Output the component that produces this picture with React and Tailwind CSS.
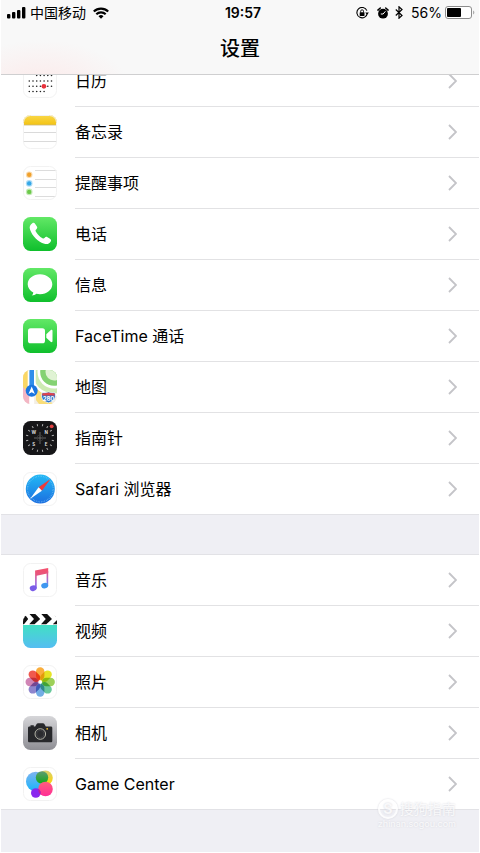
import { useId } from 'react';

const TICKS = Array.from({ length: 16 }, (_, i) => i * 22.5 + 11.25);
const PETALS = ['#f9a01b', '#e3e000', '#8cc83c', '#4fbf8b', '#5a9fe0', '#7a6fc4', '#c86fa8', '#ee3b2f'];

// Rounded app tile, everything inside is clipped to it
function Tile({ fill = '#fff', outline = false, children }) {
  const id = useId();
  return (
    <svg viewBox="0 0 34 34" className="mt-2 size-[34px] shrink-0" aria-hidden="true">
      <clipPath id={id}>
        <rect width="34" height="34" rx="7.5" />
      </clipPath>
      <g clipPath={`url(#${id})`}>
        <rect width="34" height="34" fill={fill} />
        {children}
      </g>
      {outline && <rect x=".5" y=".5" width="33" height="33" rx="7" fill="none" stroke="#f2f2f2" />}
    </svg>
  );
}

function Gradient({ id, from, to }) {
  return (
    <linearGradient id={id} x1="0" y1="0" x2="0" y2="1">
      <stop offset="0" stopColor={from} />
      <stop offset="1" stopColor={to} />
    </linearGradient>
  );
}

function CalendarIcon() {
  const rows = [[2, 6, 11.5], [0, 6, 17], [0, 6, 22.3], [0, 4, 27.5]];
  return (
    <Tile outline>
      {rows.map(([from, to, y]) =>
        Array.from({ length: to - from + 1 }, (_, i) => (
          <circle key={`${y}-${i}`} cx={6.3 + (from + i) * 3.7} cy={y} r=".8" fill="#222" />
        ))
      )}
      <circle cx="20.9" cy="22.3" r="2.4" fill="#e8323c" />
    </Tile>
  );
}

function NotesIcon() {
  return (
    <Tile outline>
      <Gradient id="notes" from="#fad84a" to="#f3c313" />
      <rect width="34" height="10" fill="url(#notes)" />
      <path d="M0 10h34" stroke="#cbb77a" strokeWidth=".8" />
      <path d="M0 17.5h34M0 26.5h34" stroke="#dadada" />
    </Tile>
  );
}

function RemindersIcon() {
  return (
    <Tile outline>
      <path d="M12 4.5h22M12 13.5h22M12 21.5h22M12 30.5h22" stroke="#dcdcdc" />
      {[['#f0a02c', 8.8], ['#35a8e8', 17.4], ['#6cc94a', 25.9]].map(([c, y]) => (
        <g key={y}>
          <circle cx="6.2" cy={y} r="3.3" fill={c} opacity=".4" />
          <circle cx="6.2" cy={y} r="2.2" fill={c} />
        </g>
      ))}
    </Tile>
  );
}

function PhoneIcon() {
  return (
    <Tile fill="url(#green)">
      <path
        d="M9.3 6.2c1.2-.8 2.1-.5 2.9.7l1.7 2.7c.6 1 .4 1.9-.5 2.7-.9.7-1.1 1.3-.6 2.2 1.6 2.9 3.8 5.1 6.7 6.7.9.5 1.5.3 2.2-.5.8-1 1.7-1.2 2.8-.5l2.5 1.6c1.2.8 1.4 1.8.6 2.9-1.4 2.1-3.5 2.9-6.1 2.1C15 24.7 9.5 19.5 7 12.4c-.9-2.6.1-4.8 2.3-6.200z"
        fill="#fff"
      />
    </Tile>
  );
}

function MessagesIcon() {
  return (
    <Tile fill="url(#green)">
      <path
        d="M17 6.200c6.900 0 12.300 4.400 12.300 10S23.900 26.200 17 26.200c-1.300 0-2.500-.1-3.700-.4-1.100 1-2.700 1.600-4.700 1.700 1-.9 1.600-1.900 1.700-3.100C6.900 22.600 4.700 19.700 4.700 16.200c0-5.600 5.400-10 12.300-10z"
        fill="#fff"
      />
    </Tile>
  );
}

function FaceTimeIcon() {
  return (
    <Tile fill="url(#green)">
      <rect x="5" y="9.3" width="17" height="15" rx="2.600" fill="#fff" />
      <path d="M23.300 15.200l4.300-4c.9-.8 1.900-.5 1.900.7v10.200c0 1.200-1 1.500-1.900.7l-4.300-4z" fill="#fff" />
    </Tile>
  );
}

function MapsIcon() {
  return (
    <Tile fill="#f3eee4">
      <path d="M0 0h6v20H0z" fill="#fad766" />
      <path d="M0 17l8 8v9H0z" fill="#f3b6c4" />
      <path d="M13 17l17 17H16l-3-4z" fill="#f9dd78" />
      <circle cx="31" cy="2" r="24" fill="#fff" />
      <circle cx="31" cy="2" r="21.5" fill="#cdeab2" />
      <circle cx="31" cy="2" r="16.500" fill="#fff" />
      <circle cx="31" cy="2" r="13.800" fill="#84d272" />
      <circle cx="31" cy="2" r="8.500" fill="#e0f3d4" />
      <path d="M8.700 24v10" stroke="#fff" strokeWidth="5" />
      <path d="M8.700 0v18" stroke="#fff" strokeWidth="8" />
      <path d="M8.700 0v18" stroke="#2f8eea" strokeWidth="4.600" />
      <circle cx="8.700" cy="20.800" r="6" fill="#1976e0" />
      <path d="M8.700 16.600l3.200 7.400-3.200-1.700-3.200 1.700z" fill="#fff" />
      <path
        d="M19.500 22.500c1.800.6 3.300.3 6-.5 2.700.8 4.200 1.100 6 .5 1.500 2 1.300 5-.3 7.200-1.300 1.700-3.500 2.200-5.700 3.100-2.200-.9-4.400-1.400-5.700-3.100-1.600-2.200-1.800-5.200-.3-7.200z"
        fill="#2671c8"
        stroke="#fff"
        strokeWidth=".7"
      />
      <path d="M19.700 23c1.700.5 3.300.2 5.800-.5 2.500.7 4.100 1 5.800.5l.7 2.400H19z" fill="#e0424c" />
      <text x="25.500" y="30.600" textAnchor="middle" fontSize="6" fontWeight="700" fill="#fff" fontFamily="Inter, sans-serif">
        280
      </text>
    </Tile>
  );
}

function CompassIcon() {
  return (
    <Tile fill="#161618">
      {TICKS.map((a) => (
        <path key={a} d="M17 2.800v2.200" stroke="#b0b0b0" strokeWidth="1" transform={`rotate(${a} 17 17)`} />
      ))}
      <path d="M17 11v12M11 17h12" stroke="#777" strokeWidth=".8" />
      <circle cx="17" cy="17" r="3" fill="none" stroke="#3c3c3c" strokeWidth=".7" />
      <circle cx="28.700" cy="5.300" r="1.900" fill="#e04040" />
      {[['W', 10.8, 12.6], ['N', 23.2, 12.6], ['S', 10.8, 25.2], ['E', 23.2, 25.2]].map(([t, x, y]) => (
        <text key={t} x={x} y={y} textAnchor="middle" fontSize="4.500" fontWeight="700" fill="#ddd" fontFamily="Inter, sans-serif">
          {t}
        </text>
      ))}
    </Tile>
  );
}

function SafariIcon() {
  return (
    <Tile outline>
      <Gradient id="safari" from="#22b9f5" to="#1c6fe0" />
      <circle cx="17.300" cy="17" r="14.500" fill="url(#safari)" />
      <circle cx="17.300" cy="17" r="12.800" fill="none" stroke="#8fd0f8" strokeWidth="1.300" strokeDasharray=".4 1.300" />
      <path d="M27.500 7L18.900 18.800 15.600 15.200z" fill="#ee3a3a" />
      <path d="M7 27l8.600-11.800 3.300 3.600z" fill="#fff" />
    </Tile>
  );
}

function MusicIcon() {
  return (
    <Tile outline>
      <linearGradient id="music" gradientUnits="userSpaceOnUse" x1="19" y1="5" x2="15" y2="29">
        <stop offset="0" stopColor="#f4506e" />
        <stop offset=".3" stopColor="#e6567f" />
        <stop offset=".6" stopColor="#a565d8" />
        <stop offset="1" stopColor="#6a5cf0" />
      </linearGradient>
      <linearGradient id="musicStem" gradientUnits="userSpaceOnUse" x1="0" y1="8" x2="0" y2="26">
        <stop offset="0" stopColor="#f0527a" />
        <stop offset=".5" stopColor="#a070d8" />
        <stop offset="1" stopColor="#3a9cf2" />
      </linearGradient>
      <path d="M12.100 7.600L25.200 5v5.300l-11.500 2.400v12.700h-1.600z" fill="url(#music)" />
      <ellipse cx="10.200" cy="25.200" rx="3.500" ry="2.800" fill="#7a5ce8" transform="rotate(-15 10.200 25.200)" />
      <path d="M23.600 8h1.600v14.800h-1.600z" fill="url(#musicStem)" />
      <ellipse cx="21.700" cy="22.600" rx="3.500" ry="2.800" fill="#3f97f0" transform="rotate(-15 21.700 22.600)" />
    </Tile>
  );
}

function VideosIcon() {
  return (
    <Tile>
      <Gradient id="videos" from="#41e0c4" to="#55bdf2" />
      <rect y="11" width="34" height="23" fill="url(#videos)" />
      <path
        d="M0 0h1.500L5.200 5 1 10.200H0zM6.500 0h5.800l4.900 5-5.700 5.200H6.200L11 5zM18.300 0h5.800L29 5l-5.700 5.200H18L22.800 5zM30 0h4v4zM34 6v4.200h-4.200z"
        fill="#111"
      />
    </Tile>
  );
}

function PhotosIcon() {
  return (
    <Tile outline>
      {PETALS.map((c, i) => (
        <rect
          key={c}
          x="13"
          y="2.300"
          width="8.400"
          height="13"
          rx="4.200"
          fill={c}
          opacity=".85"
          className="mix-blend-multiply"
          transform={`rotate(${i * 45} 17.200 17)`}
        />
      ))}
    </Tile>
  );
}

function CameraIcon() {
  return (
    <Tile fill="url(#silver)">
      <Gradient id="silver" from="#d6d6d9" to="#8e8e94" />
      <path
        d="M6.500 10.500h1V9.200h3.300v1.300h1.400l1.600-2.700c.3-.4.7-.6 1.200-.6h5c.5 0 .9.2 1.200.6l1.600 2.700h5c1 0 1.500.5 1.500 1.500v12.700c0 1-.5 1.500-1.500 1.500H6.500c-1 0-1.500-.5-1.500-1.500V12c0-1 .5-1.500 1.500-1.500z"
        fill="#27282b"
      />
      <circle cx="17.300" cy="18" r="5.300" fill="#2b2c2f" stroke="#b5b5a8" strokeWidth="1" />
      <circle cx="17.300" cy="18" r="3.700" fill="none" stroke="#47484c" strokeWidth=".7" />
      <circle cx="24.200" cy="12.800" r=".9" fill="#f4c030" />
    </Tile>
  );
}

function GameCenterIcon() {
  return (
    <Tile outline>
      <Gradient id="gcBlue" from="#7fb4f0" to="#18b4fb" />
      <Gradient id="gcPink" from="#ff5f7c" to="#ff2d96" />
      <Gradient id="gcYellow" from="#d9d070" to="#ffd400" />
      <Gradient id="gcGreen" from="#5f9c72" to="#12a818" />
      <circle cx="22.500" cy="10.800" r="7.300" fill="url(#gcYellow)" />
      <circle cx="12.800" cy="14.500" r="9.800" fill="url(#gcBlue)" />
      <circle cx="19" cy="10.500" r="6.200" fill="url(#gcGreen)" />
      <circle cx="22.500" cy="22" r="7.300" fill="url(#gcPink)" />
      <circle cx="12.800" cy="26" r="4.800" fill="#8a28ee" />
      <path d="M15.300 21.900a4.800 4.800 0 0 1 2 5.800 7.300 7.300 0 0 1-2-5.800z" fill="#c0209c" />
    </Tile>
  );
}

const GROUPS = [
  [
    ['日历', CalendarIcon],
    ['备忘录', NotesIcon],
    ['提醒事项', RemindersIcon],
    ['电话', PhoneIcon],
    ['信息', MessagesIcon],
    ['FaceTime 通话', FaceTimeIcon],
    ['地图', MapsIcon],
    ['指南针', CompassIcon],
    ['Safari 浏览器', SafariIcon],
  ],
  [
    ['音乐', MusicIcon],
    ['视频', VideosIcon],
    ['照片', PhotosIcon],
    ['相机', CameraIcon],
    ['Game Center', GameCenterIcon],
  ],
];

function StatusBar() {
  return (
    <div className="grid h-[25px] grid-cols-[1fr_auto_1fr] items-center pl-1.5 pr-1 text-sm leading-6">
      <div className="flex items-center gap-1">
        <svg viewBox="0 0 19 12" className="h-3 w-[19px]" aria-hidden="true">
          <rect x="0" y="7" width="3.400" height="4.500" rx="1" />
          <rect x="5" y="5" width="3.400" height="6.500" rx="1" />
          <rect x="10" y="3" width="3.400" height="8.500" rx="1" />
          <rect x="15" y="0" width="3.400" height="11.500" rx="1" />
        </svg>
        <span>中国移动</span>
        <svg viewBox="0 0 16 12" className="ml-[3px] h-3 w-4" fill="none" stroke="#000" strokeWidth="2.100" aria-hidden="true">
          <path d="M.8 4.600a10.200 10.200 0 0 1 14.400 0M3.300 7.300a6.600 6.600 0 0 1 9.400 0" />
          <path d="M8 11.800L5.500 9.200a3.600 3.600 0 0 1 5 0z" fill="#000" stroke="none" />
        </svg>
      </div>
      <span className="pl-1 font-semibold">19:57</span>
      <div className="flex items-center justify-end">
        <svg viewBox="0 0 13 12" className="mr-2 h-3 w-[13px]" aria-hidden="true">
          <path d="M10.900 3.600A5.200 5.200 0 1 0 11.300 6" fill="none" stroke="#000" strokeWidth="1.100" />
          <path d="M9.200 5.400h3.700l-1.800 2.400z" />
          <rect x="3.700" y="5.300" width="4.800" height="3.600" rx=".4" />
          <path d="M4.700 5.600V4.200a1.400 1.400 0 0 1 2.800 0v1.400" fill="none" stroke="#000" strokeWidth=".9" />
        </svg>
        <svg viewBox="0 0 12 12" className="mr-1.5 h-3 w-3" aria-hidden="true">
          <circle cx="6" cy="6.700" r="4.900" />
          <path d="M.9 3.100L3.300 1M11.100 3.100L8.700 1" stroke="#000" strokeWidth="1.500" strokeLinecap="round" />
          <path d="M8.400 4.300L6.100 7H3.800" fill="none" stroke="#fff" strokeWidth="1" />
        </svg>
        <svg viewBox="0 0 8 13" className="mr-2 h-[13px] w-2" fill="none" stroke="#000" strokeWidth="1.200" aria-hidden="true">
          <path d="M.8 3.500l6.200 6-3 2.700V.8l3 2.700-6.200 6" />
        </svg>
        <span>56%</span>
        <svg viewBox="0 0 30 13" className="ml-[3px] h-[13px] w-[30px]" aria-hidden="true">
          <rect x=".5" y=".5" width="26" height="12" rx="2.500" fill="#fff" stroke="#8c8c8c" />
          <rect x="2" y="2" width="14" height="9" rx="1" />
          <path d="M28.300 4.500c1.300.6 1.300 3.400 0 4z" fill="#8c8c8c" />
        </svg>
      </div>
    </div>
  );
}

function Row({ label, Icon }) {
  return (
    <li className="group">
      <a href="#" className="flex items-start pl-[22px]">
        <Icon />
        <div className="ml-[18px] flex h-[51px] flex-1 items-center justify-between border-b border-[#e2e2e4] pr-[22px] group-last:h-[50px] group-last:border-b-0">
          <span>{label}</span>
          <svg viewBox="0 0 9 16" className="h-4 w-[9px]" fill="none" stroke="#c4c4c8" strokeWidth="1.800" aria-hidden="true">
            <path d="M1 1l7 7-7 7" />
          </svg>
        </div>
      </a>
    </li>
  );
}

export default function App() {
  return (
    <div className="relative flex min-h-screen flex-col bg-white px-px pb-px font-['Inter','Noto_Sans_CJK_SC',sans-serif] text-black">
      <header className="sticky top-0 z-10 border-b border-[#cfcfd0] bg-[#f8f8f8] bg-[radial-gradient(ellipse_90px_50px_at_40px_90px,#fce9e9,transparent)]">
        <StatusBar />
        <h1 className="text-center text-xl leading-[49px] font-medium">设置</h1>
      </header>

      {/* List is scrolled a little way under the bar */}
      <main className="-mt-5 flex-1 bg-[#efeff4]">
        {GROUPS.map((items, i) => (
          <ul key={i} className="mb-[39px] border-y border-[#e2e2e6] bg-white text-base">
            {items.map(([label, Icon]) => (
              <Row key={label} label={label} Icon={Icon} />
            ))}
          </ul>
        ))}
      </main>

      {/* Site watermark */}
      <div className="absolute right-6 bottom-6 z-10 flex flex-col text-white/80 [text-shadow:0_0_2px_#d0d0d8]">
        <div className="flex items-center gap-0.5">
          <span className="flex size-5 items-center justify-center rounded-full border-2 border-white/80 text-sm leading-none font-bold shadow-[0_0_2px_#d0d0d8]">S</span>
          <span className="text-sm leading-5">搜狗指南</span>
        </div>
        <span className="text-[9px] leading-[10px]">zhinan.sogou.com</span>
      </div>

      <svg className="absolute size-0" aria-hidden="true">
        <Gradient id="green" from="#62e866" to="#0fbf2c" />
      </svg>
    </div>
  );
}
